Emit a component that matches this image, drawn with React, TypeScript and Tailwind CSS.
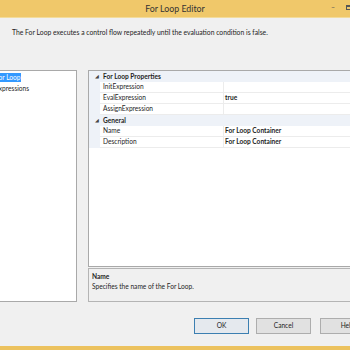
import React from "react";

const rows: { name: string; value?: string; category?: boolean }[] = [
  { name: "For Loop Properties", category: true },
  { name: "InitExpression", value: "" },
  { name: "EvalExpression", value: "true" },
  { name: "AssignExpression", value: "" },
  { name: "General", category: true },
  { name: "Name", value: "For Loop Container" },
  { name: "Description", value: "For Loop Container" },
];

function PropertyRow({ name, value, category }: { name: string; value?: string; category?: boolean }) {
  if (category) {
    return (
      <div className="flex h-[11px] items-center bg-[#eef2f8]">
        <div className="flex w-[13px] justify-end pr-[3px] text-[5px] leading-none text-[#444]">◢</div>
        <div className="pl-[1px] font-bold text-[#1e1e1e]">{name}</div>
      </div>
    );
  }
  return (
    <div className="flex h-[11px]">
      <div className="w-[11px] shrink-0 bg-[#eef2f8]" />
      <div className="flex w-[124px] shrink-0 items-center border-r border-b border-[#ececec] pl-[3px] text-[#1e1e1e]">
        {name}
      </div>
      <div className="flex flex-1 items-center border-b border-[#ececec] pl-[1px] font-bold text-[#1e1e1e]">
        {value}
      </div>
    </div>
  );
}

export default function App() {
  return (
    <div className="flex h-[350px] w-[350px] flex-col overflow-hidden bg-[#f0f0f0] font-['Lato','Liberation_Sans',sans-serif] text-[6.6px] text-[#1e1e1e]">
      {/* title bar */}
      <div className="relative flex h-[18px] shrink-0 items-center justify-center border-b border-[#f3dc9c] bg-[#f0c86a]">
        <span className="text-[8.8px] text-[#333]">For Loop Editor</span>
        <span className="absolute left-[331px] top-[4px] text-[7px] leading-none text-[#555]">–</span>
        <span className="absolute left-[346px] top-[5px] h-[5px] w-[8px] border border-t-2 border-[#555]" />
      </div>

      {/* description */}
      <div className="h-[52px] shrink-0 pl-[12px] pt-[9px] text-[6.8px]">
        The For Loop executes a control flow repeatedly until the evaluation condition is false.
      </div>

      {/* main area */}
      <div className="flex h-[232px] shrink-0">
        <div className="w-[77px] shrink-0 border-y border-r border-[#a9a9a9] bg-white pt-[1px]">
          <div className="flex h-[11px] items-center">
            <span className="-ml-[5px] bg-[#3399ff] pr-[1px] leading-[9px] text-white">For Loop</span>
          </div>
          <div className="-ml-[5px] flex h-[11px] items-center">Expressions</div>
        </div>

        <div className="ml-[11px] flex w-[280px] shrink-0 flex-col">
          <div className="h-[197px] border border-r-0 border-[#a9a9a9] bg-white">
            {rows.map((r) => (
              <PropertyRow key={r.name} {...r} />
            ))}
          </div>
          <div className="mt-[1px] h-[34px] border border-r-0 border-[#b4b4b4] bg-[#f0f0f0] pl-[3px] pt-[2px]">
            <div className="font-bold leading-[10px]">Name</div>
            <div className="leading-[10px]">Specifies the name of the For Loop.</div>
          </div>
        </div>
      </div>

      {/* buttons */}
      <div className="mt-[16px] flex h-[16px] shrink-0">
        <button className="ml-[194px] flex w-[55px] shrink-0 items-center justify-center border border-[#3c7fb1] bg-[#e5e9ee]">
          OK
        </button>
        <button className="ml-[7px] flex w-[55px] shrink-0 items-center justify-center border border-[#adadad] bg-[#e1e1e1]">
          Cancel
        </button>
        <button className="ml-[9px] flex w-[55px] shrink-0 items-center justify-center border border-[#adadad] bg-[#e1e1e1]">
          Help
        </button>
      </div>

      <div className="flex-1" />
      <div className="h-[4px] shrink-0 bg-[#ecc25e]" />
    </div>
  );
}
